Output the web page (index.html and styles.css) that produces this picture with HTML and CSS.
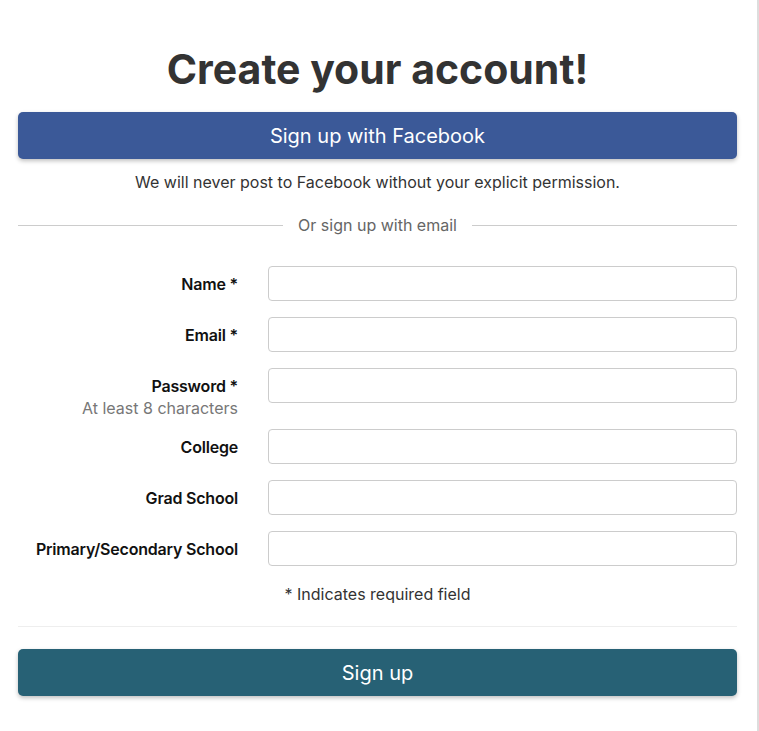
FILE: index.html
```html
<!DOCTYPE html>
<html lang="en">
<head>
    <meta charset="UTF-8">
    <meta name="viewport" content="width=device-width, initial-scale=1.0">
    <title>Create your account</title>
    <link rel="stylesheet" href="styles.css">
</head>
<body>
    <div class="page">
        <h1 class="title">Create your account!</h1>
        <button class="btn fb-btn">Sign up with Facebook</button>
        <p class="fb-note">We will never post to Facebook without your explicit permission.</p>

        <div class="divider"><span>Or sign up with email</span></div>

        <form class="signup-form">
            <div class="row">
                <label class="label" for="name">Name *</label>
                <input class="field" type="text" id="name">
            </div>
            <div class="row">
                <label class="label" for="email">Email *</label>
                <input class="field" type="email" id="email">
            </div>
            <div class="row">
                <label class="label" for="password">Password *<span class="hint">At least 8 characters</span></label>
                <input class="field" type="password" id="password">
            </div>
            <div class="row">
                <label class="label" for="college">College</label>
                <input class="field" type="text" id="college">
            </div>
            <div class="row">
                <label class="label" for="grad">Grad School</label>
                <input class="field" type="text" id="grad">
            </div>
            <div class="row">
                <label class="label" for="school">Primary/Secondary School</label>
                <input class="field" type="text" id="school">
            </div>
            <p class="required-note">* Indicates required field</p>
            <hr class="rule">
            <button class="btn submit-btn" type="button">Sign up</button>
        </form>
    </div>
</body>
</html>
```

FILE: styles.css
```css
body { margin: 0; font-family: Inter, "Noto Sans", sans-serif; color: #333; background: #fff; }
.page { box-sizing: border-box; min-height: 731px; padding: 44px 20px 20px 18px; border-right: 2px solid #ddd; }

.title { margin: 0 0 18px; text-align: center; font-size: 41px; font-weight: 700; line-height: 50px; color: #333; }

.btn { display: block; width: 100%; height: 47px; border: none; border-radius: 5px; color: #fff; font-family: inherit; font-size: 20px; cursor: pointer; box-shadow: 0px 2px 4px rgba(0, 0, 0, 0.25); }
.fb-btn { background: #3b5998; }
.submit-btn { background: #276175; }

.fb-note { margin: 11px 0 0; text-align: center; font-size: 16px; line-height: 24px; }

.divider { display: flex; align-items: center; gap: 15px; margin-top: 19px; color: #666; font-size: 16px; line-height: 24px; }
.divider::before, .divider::after { content: ""; flex: 1; border-top: 1px solid #ccc; }

.signup-form { margin-top: 29px; }
.row { display: grid; grid-template-columns: 220px 1fr; column-gap: 30px; margin-bottom: 16px; }
.label { text-align: right; font-size: 16px; font-weight: 600; letter-spacing: -0.2px; color: #111; line-height: 22px; padding-top: 7px; }
.hint { display: block; margin-bottom: -6px; font-weight: 400; letter-spacing: 0; color: #777; }
.field { box-sizing: border-box; height: 35px; border: 1px solid #ccc; border-radius: 4px; font-family: inherit; font-size: 16px; padding: 0 10px; }

.required-note { margin: 0; text-align: center; font-size: 16px; line-height: 24px; color: #333; }
.rule { border: none; border-top: 1px solid #eee; margin: 20px 0 22px; }
```
